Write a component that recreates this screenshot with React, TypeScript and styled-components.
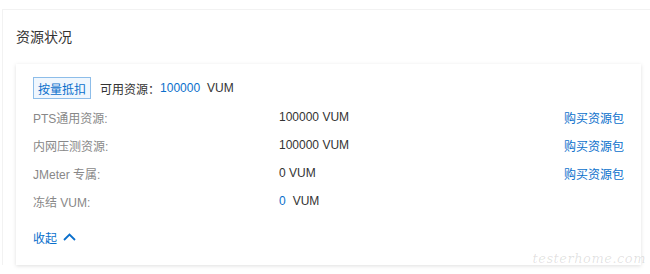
import React from 'react';
import styled, { createGlobalStyle } from 'styled-components';

const GlobalStyle = createGlobalStyle`
  body {
    margin: 0;
    background: #fff;
    font-family: "Liberation Sans", "Noto Sans CJK SC", sans-serif;
    color: #333;
  }
`;

const BLUE = '#0a6fcc';

interface ResourceRow {
  label: string;
  value: string;
  unit?: string;
  highlight?: boolean;
  canBuy?: boolean;
}

const rows: ResourceRow[] = [
  { label: 'PTS通用资源:', value: '100000 VUM', canBuy: true },
  { label: '内网压测资源:', value: '100000 VUM', canBuy: true },
  { label: 'JMeter 专属:', value: '0 VUM', canBuy: true },
  { label: '冻结 VUM:', value: '0', unit: 'VUM', highlight: true },
];

const Page = styled.div`
  position: relative;
  height: 274px;
  overflow: hidden;
`;

const Panel = styled.section`
  margin: 9px 0 0 2px;
  padding: 17px 9px 0 13px;
  border-top: 1px solid #f2f2f2;
  border-left: 1px solid #f2f2f2;
`;

const Title = styled.h2`
  margin: 0 0 17px;
  font-size: 14px;
  font-weight: 400;
  line-height: 20px;
  color: #333;
`;

const Card = styled.div`
  padding: 13px 17px 18px;
  background: #fff;
  box-shadow: 0 1px 4px rgba(0, 0, 0, 0.13);
`;

const Summary = styled.div`
  display: flex;
  align-items: center;
  height: 22px;
  margin-bottom: 4px;
  font-size: 12px;
`;

const Tag = styled.span`
  display: inline-flex;
  align-items: center;
  box-sizing: border-box;
  height: 22px;
  padding: 0 4px;
  margin-right: 9px;
  border: 1px solid #8dbde9;
  background: #f0f7fe;
  color: ${BLUE};
  font-size: 12px;
`;

const Num = styled.span`
  color: ${BLUE};
  margin-right: 7px;
`;

const Row = styled.div`
  display: grid;
  grid-template-columns: 246px 1fr auto;
  align-items: center;
  height: 28px;
  font-size: 12px;
`;

const Label = styled.span`
  color: #888;
`;

const Value = styled.span`
  color: #333;
`;

const Link = styled.a`
  color: ${BLUE};
  text-decoration: none;
  cursor: pointer;
`;

const Toggle = styled.a`
  display: inline-flex;
  align-items: center;
  gap: 6px;
  margin-top: 12px;
  height: 20px;
  font-size: 12px;
  color: ${BLUE};
  cursor: pointer;
`;

const Watermark = styled.span`
  position: absolute;
  right: 4px;
  bottom: 8px;
  font-family: "DejaVu Serif", serif;
  font-style: italic;
  font-size: 13px;
  letter-spacing: 0.5px;
  color: rgba(0, 0, 0, 0.12);
  pointer-events: none;
`;

const App = () => (
  <>
    <GlobalStyle />
    <Page>
      <Panel>
        <Title>资源状况</Title>
        <Card>
          <Summary>
            <Tag>按量抵扣</Tag>
            可用资源：<Num>100000</Num>VUM
          </Summary>
          {rows.map((row) => (
            <Row key={row.label}>
              <Label>{row.label}</Label>
              <Value>
                {row.highlight ? <Num>{row.value}</Num> : row.value}
                {row.unit}
              </Value>
              {row.canBuy ? <Link>购买资源包</Link> : <span />}
            </Row>
          ))}
          <Toggle>
            收起
            <svg width="13" height="8" viewBox="0 0 13 8" fill="none">
              <path d="M1 7L6.5 1.5L12 7" stroke={BLUE} strokeWidth="1.8" />
            </svg>
          </Toggle>
        </Card>
      </Panel>
      <Watermark>testerhome.com</Watermark>
    </Page>
  </>
);

export default App;
